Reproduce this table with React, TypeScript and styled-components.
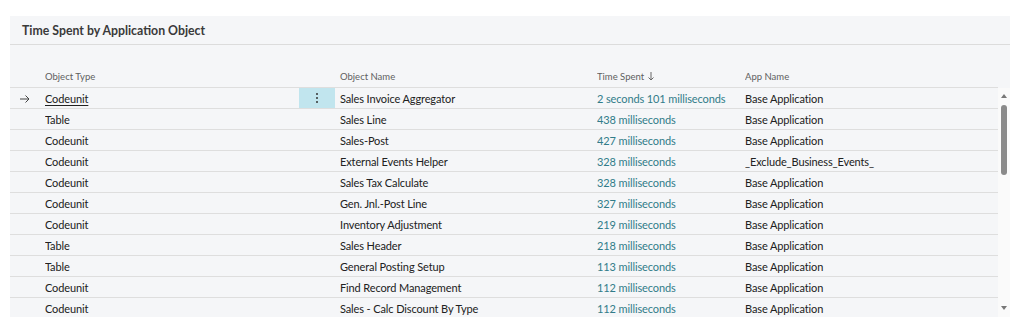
import { createGlobalStyle } from 'styled-components'
import styled from 'styled-components'

interface Row {
  type: string
  name: string
  time: string
  app: string
}

const rows: Row[] = [
  { type: 'Codeunit', name: 'Sales Invoice Aggregator', time: '2 seconds 101 milliseconds', app: 'Base Application' },
  { type: 'Table', name: 'Sales Line', time: '438 milliseconds', app: 'Base Application' },
  { type: 'Codeunit', name: 'Sales-Post', time: '427 milliseconds', app: 'Base Application' },
  { type: 'Codeunit', name: 'External Events Helper', time: '328 milliseconds', app: '_Exclude_Business_Events_' },
  { type: 'Codeunit', name: 'Sales Tax Calculate', time: '328 milliseconds', app: 'Base Application' },
  { type: 'Codeunit', name: 'Gen. Jnl.-Post Line', time: '327 milliseconds', app: 'Base Application' },
  { type: 'Codeunit', name: 'Inventory Adjustment', time: '219 milliseconds', app: 'Base Application' },
  { type: 'Table', name: 'Sales Header', time: '218 milliseconds', app: 'Base Application' },
  { type: 'Table', name: 'General Posting Setup', time: '113 milliseconds', app: 'Base Application' },
  { type: 'Codeunit', name: 'Find Record Management', time: '112 milliseconds', app: 'Base Application' },
  { type: 'Codeunit', name: 'Sales - Calc Discount By Type', time: '112 milliseconds', app: 'Base Application' }
]

const GlobalStyle = createGlobalStyle`
  body {
    margin: 0;
    background: #ffffff;
    font-family: Lato, "Open Sans", sans-serif;
  }
`

const Page = styled.div`
  width: 1024px;
  height: 331px;
  padding: 16px 14px 14px 10px;
  box-sizing: border-box;
`

const Panel = styled.section`
  height: 301px;
  background: #f5f6f8;
  display: flex;
  flex-direction: column;
  overflow: hidden;
`

const Title = styled.h2`
  margin: 0;
  height: 29px;
  padding-left: 12px;
  padding-top: 1px;
  display: flex;
  align-items: center;
  font-size: 12.3px;
  font-weight: 700;
  color: #3a3a3a;
  border-bottom: 1px solid #dcdcdc;
  box-sizing: border-box;
`

const Grid = styled.div`
  display: grid;
  grid-template-columns: 1fr 12px;
  margin-top: 21px;
  flex: 1;
  min-height: 0;
`

const Columns = `35px 254px 36px 262px 148px 1fr`

const HeaderRow = styled.div`
  display: grid;
  grid-template-columns: ${Columns};
  height: 22px;
  align-items: center;
  border-bottom: 1px solid #dedede;
  box-sizing: border-box;
  font-size: 9.5px;
  color: #5f5f5f;
`

const Body = styled.div`
  overflow: hidden;
`

const DataRow = styled.div`
  display: grid;
  grid-template-columns: ${Columns};
  height: 21px;
  padding-top: 1px;
  box-sizing: border-box;
  border-bottom: 1px solid #dedede;
  font-size: 11px;
  letter-spacing: -0.12px;
  color: #212121;
`

const Cell = styled.div<{ $pad?: number; $tone?: 'link' | 'plain' }>`
  display: flex;
  align-items: center;
  padding-left: ${(p) => p.$pad ?? 0}px;
  white-space: nowrap;
  overflow: hidden;
  color: ${(p) => (p.$tone === 'link' ? '#317c89' : 'inherit')};
`

const Marker = styled.div`
  display: flex;
  align-items: center;
  padding-left: 10px;
`

const Underlined = styled.span`
  text-decoration: underline;
  text-underline-offset: 2px;
`

const MoreCell = styled.div<{ $active: boolean }>`
  display: flex;
  align-items: center;
  justify-content: center;
  margin-top: -1px;
  background: ${(p) => (p.$active ? '#c1e5ee' : 'transparent')};
`

const Dots = styled.span`
  display: flex;
  flex-direction: column;
  gap: 2px;
  i {
    width: 2px;
    height: 2px;
    border-radius: 1px;
    background: #333;
  }
`

const SortIcon = styled.svg`
  margin-left: 4px;
`

const HeadCorner = styled.div`
  height: 22px;
`

const Scrollbar = styled.div`
  background: #fafafa;
  position: relative;
  display: flex;
  flex-direction: column;
  align-items: center;
`

const ArrowTri = styled.span<{ $down?: boolean }>`
  margin-top: ${(p) => (p.$down ? 'auto' : '6px')};
  margin-bottom: ${(p) => (p.$down ? '7px' : '0')};
  width: 0;
  height: 0;
  border-left: 3.5px solid transparent;
  border-right: 3.5px solid transparent;
  ${(p) => (p.$down ? 'border-top: 4px solid #777;' : 'border-bottom: 4px solid #777;')}
`

const Thumb = styled.div`
  position: absolute;
  top: 17px;
  left: 3px;
  width: 6px;
  height: 70px;
  border-radius: 3px;
  background: #8a8a8a;
`

function RowArrow () {
  return (
    <svg width="10" height="8" viewBox="0 0 10 8" fill="none" stroke="#444" strokeWidth="1">
      <path d="M0 4h9M5.5 0.5L9 4L5.5 7.5" />
    </svg>
  )
}

function SortDown () {
  return (
    <SortIcon width="6" height="9" viewBox="0 0 6 9" fill="none" stroke="#666" strokeWidth="1">
      <path d="M3 0v8M0.5 5.5L3 8L5.5 5.5" />
    </SortIcon>
  )
}

export default function App () {
  return (
    <Page>
      <GlobalStyle />
      <Panel>
        <Title>Time Spent by Application Object</Title>
        <Grid>
          <div>
            <HeaderRow>
              <div />
              <Cell>Object Type</Cell>
              <div />
              <Cell $pad={5}>Object Name</Cell>
              <Cell>Time Spent<SortDown /></Cell>
              <Cell>App Name</Cell>
            </HeaderRow>
          </div>
          <HeadCorner />
          <Body>
            {rows.map((r, i) => (
              <DataRow key={i}>
                <Marker>{i === 0 && <RowArrow />}</Marker>
                <Cell>{i === 0 ? <Underlined>{r.type}</Underlined> : r.type}</Cell>
                <MoreCell $active={i === 0}>
                  {i === 0 && <Dots><i /><i /><i /></Dots>}
                </MoreCell>
                <Cell $pad={5}>{r.name}</Cell>
                <Cell $tone="link">{r.time}</Cell>
                <Cell>{r.app}</Cell>
              </DataRow>
            ))}
          </Body>
          <Scrollbar>
            <ArrowTri />
            <Thumb />
            <ArrowTri $down />
          </Scrollbar>
        </Grid>
      </Panel>
    </Page>
  )
}
